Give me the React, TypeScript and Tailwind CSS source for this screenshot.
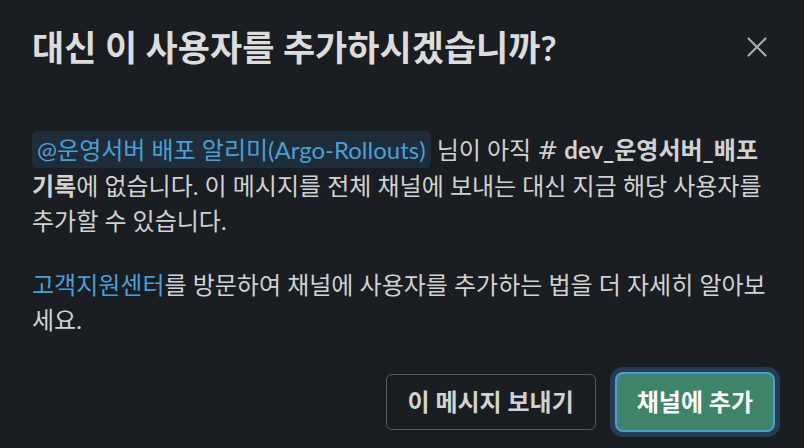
import { X } from "lucide-react";

export default function App() {
  return (
    <div className="w-[804px] h-[448px] bg-[#1a1d21] text-[#d1d2d3] font-['Lato','Noto_Sans_CJK_KR',sans-serif] overflow-hidden">
      {/* Header */}
      <div className="h-[94px] flex items-center justify-between pl-8 pr-[18px]">
        <h1 className="text-[35px] font-bold text-[#dcdcdd]">대신 이 사용자를 추가하시겠습니까?</h1>
        <button className="w-[58px] h-[58px] flex items-center justify-center text-[#ababad]">
          <X size={34} strokeWidth={1.5} />
        </button>
      </div>

      {/* Body */}
      <div className="px-8 pt-[38px] text-[24px] leading-[35.2px]">
        <p>
          <span className="bg-[#1f2c39] text-[#4a9fd6] rounded-[5px] px-[5px] py-[4px]">
            @운영서버 배포 알리미(Argo-Rollouts)
          </span>{" "}
          님이 아직{" "}
          <span className="font-bold">
            <span className="font-normal font-['DejaVu_Sans',sans-serif] text-[25px] mr-[6px]">#</span>dev_운영서버_배포 기록
          </span>
          에 없습니다. 이 메시지를 전체 채널에 보내는 대신 지금 해당 사용자를 추가할 수 있습니다.
        </p>
        <p className="mt-[28px]">
          <span className="text-[#4a9fd6]">고객지원센터</span>를 방문하여 채널에 사용자를 추가하는 법을 더 자세히
          알아보세요.
        </p>
      </div>

      {/* Footer */}
      <div className="flex justify-end items-center gap-[21px] pr-[31px] mt-[37px]">
        <button className="h-[56px] px-[21px] rounded-[6px] border border-[#5a5c5f] text-[24px] font-bold text-[#d1d2d3]">
          이 메시지 보내기
        </button>
        <button className="h-[56px] px-[20px] rounded-[6px] bg-[#3e8468] shadow-[0_0_0_2px_#4d9bd6,0_0_0_7px_#253d51] text-[24px] font-bold text-white">
          채널에 추가
        </button>
      </div>
    </div>
  );
}
